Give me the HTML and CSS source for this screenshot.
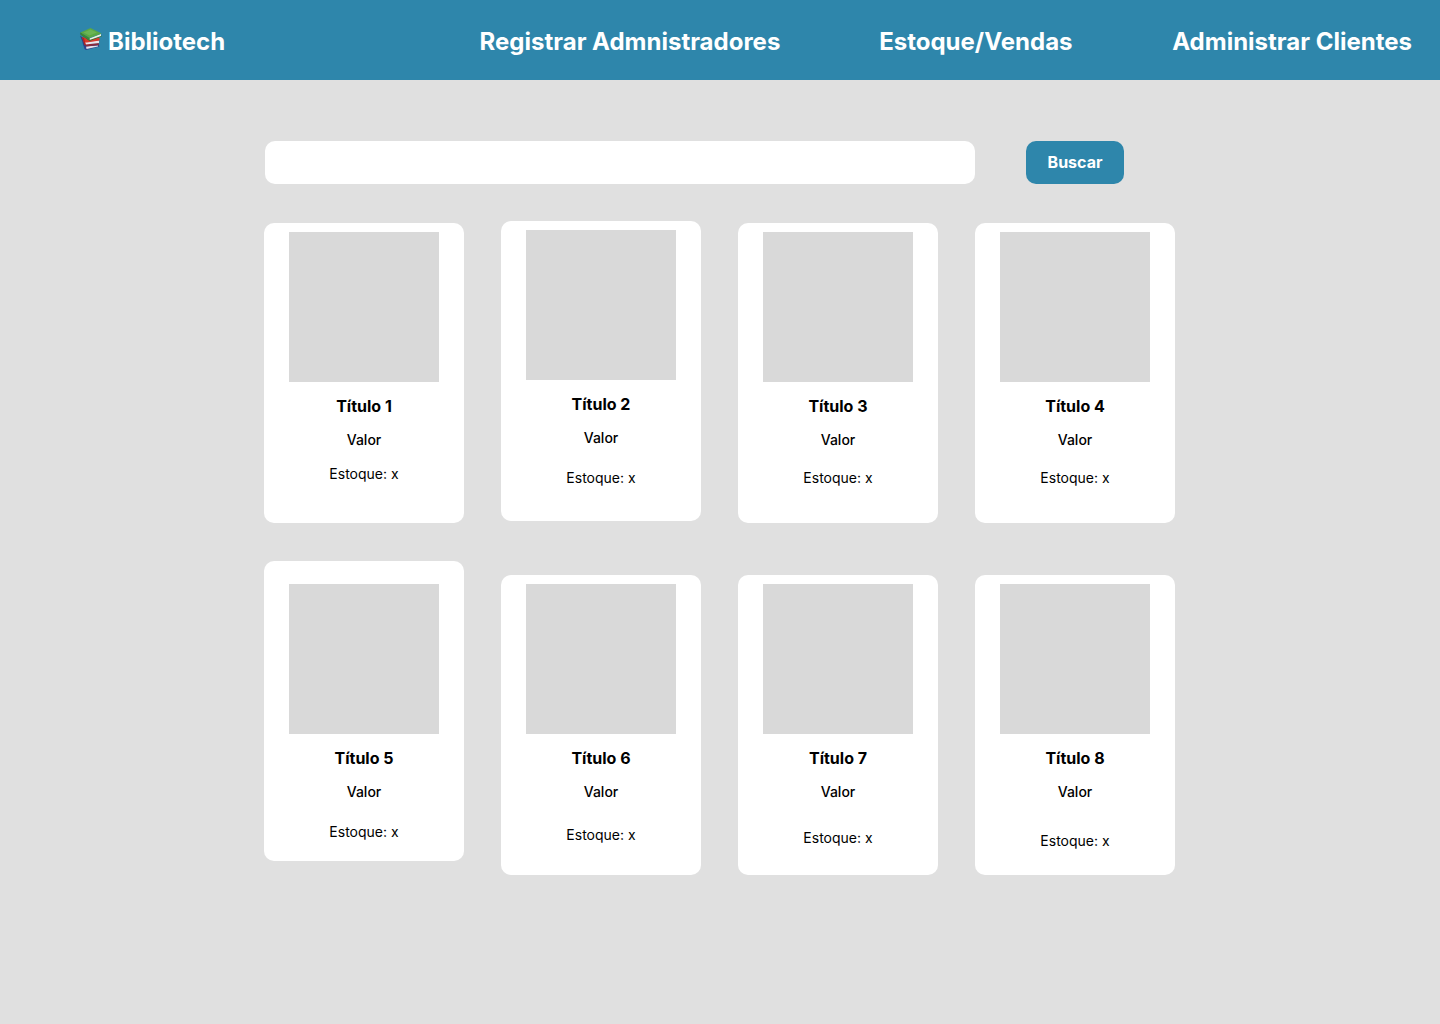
FILE: index.html
```html
<!DOCTYPE html>
<html lang="pt-BR">
<head>
  <meta charset="utf-8">
  <meta name="viewport" content="width=device-width, initial-scale=1">
  <title>Bibliotech</title>
  <link rel="stylesheet" href="styles.css">
</head>
<body>
  <header class="topbar">
    <a class="brand" href="#">
      <svg class="brand-icon" viewBox="0 0 44 44" aria-hidden="true">
        <path fill="#2b4590" d="M5 29 36 31 39 37 12 44 9 42Z"/>
        <path fill="#e6e1ea" d="M12 37 36 35 36 37 13 42Z"/>
        <path fill="#8b2a3c" d="M8 32 37 30 38 34 12 37Z"/>
        <path fill="#33407f" d="M0 15 5 19 11 36 8 36Z"/>
        <path fill="#e9e4ec" d="M9 28 38 25 38 30 11 33Z"/>
        <path fill="#d8392b" d="M4 18 20 22 39 19 39 25 14 29 8 29Z"/>
        <path fill="#b3231f" d="M4 18 8 20 12 34 9 34Z"/>
        <path fill="#2d6f2c" d="M1 9 1 13 19 26 43 17 43 15 19 23Z"/>
        <path fill="#eef1e2" d="M19 21 42 12 42 16 19 24Z"/>
        <path fill="#5aa845" d="M1 9 21 0 43 11 19 20Z"/>
        <path fill="#3b8737" d="M1 9 19 20 19 25 1 13Z"/>
        <path fill="#7cc262" d="M7 9 21 3 34 9 19 15Z" opacity=".5"/>
      </svg>
      Bibliotech
    </a>
    <nav class="nav" aria-label="Principal">
      <a href="#">Registrar Admnistradores</a>
      <a href="#">Estoque/Vendas</a>
      <a href="#">Administrar Clientes</a>
    </nav>
  </header>

  <main class="content">
    <form class="search" role="search">
      <input class="search-input" type="search" name="q" aria-label="Buscar livro">
      <button class="search-button" type="submit">Buscar</button>
    </form>

    <section class="catalog" aria-label="Livros">
      <article class="card stock-xs">
        <div class="cover"></div>
        <h2 class="title">Título 1</h2>
        <p class="price">Valor</p>
        <p class="stock">Estoque: x</p>
      </article>
      <article class="card card-raised stock-md">
        <div class="cover"></div>
        <h2 class="title">Título 2</h2>
        <p class="price">Valor</p>
        <p class="stock">Estoque: x</p>
      </article>
      <article class="card stock-sm">
        <div class="cover"></div>
        <h2 class="title">Título 3</h2>
        <p class="price">Valor</p>
        <p class="stock">Estoque: x</p>
      </article>
      <article class="card stock-sm">
        <div class="cover"></div>
        <h2 class="title">Título 4</h2>
        <p class="price">Valor</p>
        <p class="stock">Estoque: x</p>
      </article>
      <article class="card card-raised card-roomy stock-md">
        <div class="cover"></div>
        <h2 class="title">Título 5</h2>
        <p class="price">Valor</p>
        <p class="stock">Estoque: x</p>
      </article>
      <article class="card stock-lg">
        <div class="cover"></div>
        <h2 class="title">Título 6</h2>
        <p class="price">Valor</p>
        <p class="stock">Estoque: x</p>
      </article>
      <article class="card stock-xl">
        <div class="cover"></div>
        <h2 class="title">Título 7</h2>
        <p class="price">Valor</p>
        <p class="stock">Estoque: x</p>
      </article>
      <article class="card stock-xxl">
        <div class="cover"></div>
        <h2 class="title">Título 8</h2>
        <p class="price">Valor</p>
        <p class="stock">Estoque: x</p>
      </article>
    </section>
  </main>
</body>
</html>
```
FILE: styles.css
```css
* {
  box-sizing: border-box;
}

body {
  margin: 0;
  background: #e0e0e0;
  color: #000;
  font-family: Inter, "Liberation Sans", sans-serif;
}

/* Top bar */
.topbar {
  display: grid;
  grid-template-columns: 3fr 7fr;
  align-items: center;
  padding: 27px 28px 23px 80px;
  background: #2e86ab;
  font-size: 24px;
  font-weight: 700;
  line-height: 30px;
}

.topbar a {
  color: #fff;
  text-decoration: none;
  white-space: nowrap;
}

.brand {
  display: flex;
  align-items: center;
  gap: 6px;
}

.brand-icon {
  width: 22px;
  height: 22px;
  margin-bottom: 6px;
}

.nav {
  display: grid;
  grid-template-columns: 3fr 2fr 2fr;
}

.nav a:last-child {
  justify-self: end;
}

/* Search */
.content {
  max-width: 912px;
  margin: 0 auto;
  padding: 61px 0 48px;
}

.search {
  display: flex;
  gap: 51px;
  margin: 0 52px 37px 1px;
}

.search-input {
  flex: 1;
  min-width: 0;
  padding: 0 16px;
  border: 0;
  border-radius: 10px;
  background: #fff;
  font: inherit;
}

.search-button {
  min-width: 98px;
  padding: 12px 20px;
  border: 0;
  border-radius: 10px;
  background: #2e86ab;
  color: #fff;
  font: 700 16px/19px Inter, "Liberation Sans", sans-serif;
  cursor: pointer;
}

/* Catalog */
.catalog {
  display: grid;
  grid-template-columns: repeat(auto-fill, 200px);
  align-items: end;
  gap: 38px 37px;
}

.card {
  display: flex;
  flex-direction: column;
  align-items: center;
  min-height: 300px;
  margin-top: 2px;
  padding-top: 9px;
  border-radius: 10px;
  background: #fff;
  text-align: center;
}

.card-raised {
  align-self: start;
  margin-top: 0;
  margin-bottom: 2px;
}

.card-roomy {
  margin-bottom: 14px;
  padding-top: 23px;
}

.cover {
  width: 150px;
  height: 150px;
  background: #d9d9d9;
}

.title {
  margin: 12px 0;
  font-size: 16px;
  font-weight: 700;
  line-height: 24px;
}

.price,
.stock {
  margin: 0;
  font-size: 14px;
  line-height: 20px;
}

.price {
  font-weight: 500;
}

/* Space between price and stock */
.stock-xs { --stock-gap: 14px; }
.stock-sm { --stock-gap: 18px; }
.stock-md { --stock-gap: 20px; }
.stock-lg { --stock-gap: 23px; }
.stock-xl { --stock-gap: 26px; }
.stock-xxl { --stock-gap: 29px; }

.stock {
  margin-top: var(--stock-gap);
}
```
